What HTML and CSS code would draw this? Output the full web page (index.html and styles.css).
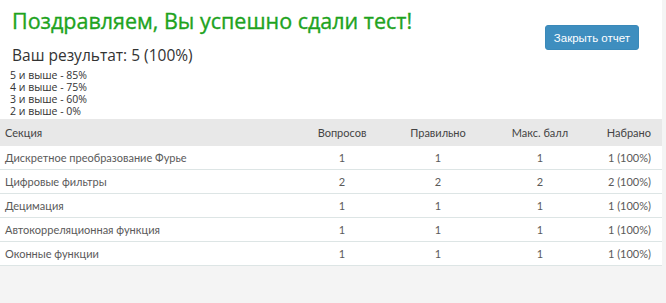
FILE: index.html
```html
<!DOCTYPE html>
<html lang="ru">
<head>
<meta charset="utf-8">
<link rel="stylesheet" href="styles.css">
</head>
<body>
<div class="panel">
  <div class="top">
    <div class="summary">
      <h1 class="title">Поздравляем, Вы успешно сдали тест!</h1>
      <div class="result">Ваш результат: 5 (100%)</div>
      <div class="levels">
        <div>5 и выше - 85%</div>
        <div>4 и выше - 75%</div>
        <div>3 и выше - 60%</div>
        <div>2 и выше - 0%</div>
      </div>
    </div>
    <button class="close-btn">Закрыть отчет</button>
  </div>
  <table class="report">
    <colgroup>
      <col class="w-name"><col class="w-q"><col class="w-ok"><col class="w-max"><col class="w-got">
    </colgroup>
    <thead>
      <tr><th class="c-name">Секция</th><th class="c-mid">Вопросов</th><th class="c-mid">Правильно</th><th class="c-mid">Макс. балл</th><th class="c-got">Набрано</th></tr>
    </thead>
    <tbody>
      <tr><td class="c-name">Дискретное преобразование Фурье</td><td class="c-mid">1</td><td class="c-mid">1</td><td class="c-mid">1</td><td class="c-got">1 (100%)</td></tr>
      <tr><td class="c-name">Цифровые фильтры</td><td class="c-mid">2</td><td class="c-mid">2</td><td class="c-mid">2</td><td class="c-got">2 (100%)</td></tr>
      <tr><td class="c-name">Децимация</td><td class="c-mid">1</td><td class="c-mid">1</td><td class="c-mid">1</td><td class="c-got">1 (100%)</td></tr>
      <tr><td class="c-name">Автокорреляционная функция</td><td class="c-mid">1</td><td class="c-mid">1</td><td class="c-mid">1</td><td class="c-got">1 (100%)</td></tr>
      <tr><td class="c-name">Оконные функции</td><td class="c-mid">1</td><td class="c-mid">1</td><td class="c-mid">1</td><td class="c-got">1 (100%)</td></tr>
    </tbody>
  </table>
</div>
</body>
</html>
```
FILE: styles.css
```css
html, body {
  margin: 0;
  padding: 0;
  background: #f4f4f4;
}
.panel {
  width: 662px;
  background: #fff;
}
.top {
  display: flex;
  justify-content: space-between;
  align-items: flex-start;
  padding: 0 23px 2px 10px;
}
.title {
  margin: 0;
  padding: 6px 0 0 2px;
  font-family: "Open Sans", sans-serif;
  font-size: 21.5px;
  font-weight: normal;
  line-height: 30px;
  color: #1ea31e;
  -webkit-text-stroke: 0.35px #1ea31e;
}
.result {
  padding: 8px 0 0 2px;
  font-family: "Open Sans", sans-serif;
  font-size: 15.5px;
  line-height: 22px;
  color: #333;
}
.levels {
  padding-top: 3px;
  font-family: "Open Sans", sans-serif;
  font-size: 10.5px;
  line-height: 12px;
  color: #333;
}
.close-btn {
  margin-top: 25px;
  height: 25px;
  padding: 0 8px;
  border: 1px solid #3a89b9;
  border-radius: 3px;
  background: #3e8ebf;
  color: #fff;
  font-family: "Liberation Sans", Arial, sans-serif;
  font-size: 11.5px;
}
.report {
  width: 662px;
  table-layout: fixed;
  border-collapse: collapse;
  font-family: Lato, sans-serif;
  font-size: 11px;
  color: #5a5a5a;
}
.w-name { width: 294px; }
.w-q { width: 96px; }
.w-ok { width: 96px; }
.w-max { width: 108px; }
.w-got { width: 68px; }
.report th {
  height: 27px;
  padding: 0 5px;
  background: #e8e8e8;
  font-weight: normal;
  color: #444;
}
.report td {
  height: 23px;
  padding: 0 5px;
  border-bottom: 1px solid #dde5e5;
}
.report .c-name { text-align: left; }
.report .c-mid { text-align: center; }
.report .c-got { text-align: right; padding-right: 11px; white-space: nowrap; }
```
